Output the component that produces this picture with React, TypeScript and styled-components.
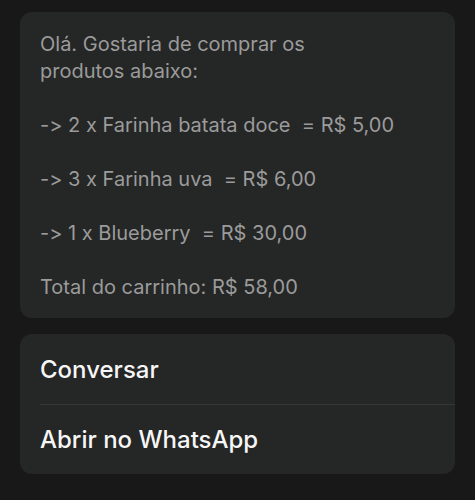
import React from 'react';
import styled, { createGlobalStyle } from 'styled-components';

const GlobalStyle = createGlobalStyle`
  html, body {
    margin: 0;
    padding: 0;
    background-color: #181818;
  }
  body {
    font-family: Inter, "Noto Sans", "Liberation Sans", sans-serif;
    font-variant-ligatures: none;
    font-feature-settings: "calt" 0, "liga" 0;
    -webkit-font-smoothing: antialiased;
  }
`;

const Screen = styled.div`
  width: 475px;
  height: 500px;
  box-sizing: border-box;
  padding: 12px 20px 0;
  display: flex;
  flex-direction: column;
  gap: 16px;
  background-color: #181818;
`;

const MessageCard = styled.div`
  background-color: #252626;
  border-radius: 12px;
  padding: 19px 20px 17px;
`;

const MessageText = styled.p`
  margin: 0;
  font-size: 20px;
  line-height: 27px;
  color: #9b9b9b;
  white-space: pre-wrap;
`;

const ActionCard = styled.div`
  background-color: #252626;
  border-radius: 12px;
  display: flex;
  flex-direction: column;
`;

const ActionRow = styled.div<{ divider?: boolean }>`
  height: 70px;
  margin-left: 20px;
  display: flex;
  align-items: center;
  font-size: 24px;
  font-weight: 500;
  color: #f6f6f6;
  border-top: ${props => (props.divider ? '1px solid #353636' : 'none')};
  box-sizing: border-box;
`;

const message = `Olá. Gostaria de comprar os
produtos abaixo:

-> 2 x Farinha batata doce  = R$ 5,00

-> 3 x Farinha uva  = R$ 6,00

-> 1 x Blueberry  = R$ 30,00

Total do carrinho: R$ 58,00`;

const actions = ['Conversar', 'Abrir no WhatsApp'];

const App: React.FC = () => {
  return (
    <>
      <GlobalStyle />
      <Screen>
        <MessageCard>
          <MessageText>{message}</MessageText>
        </MessageCard>
        <ActionCard>
          {actions.map((label, index) => (
            <ActionRow key={label} divider={index > 0}>
              {label}
            </ActionRow>
          ))}
        </ActionCard>
      </Screen>
    </>
  );
};

export default App;
